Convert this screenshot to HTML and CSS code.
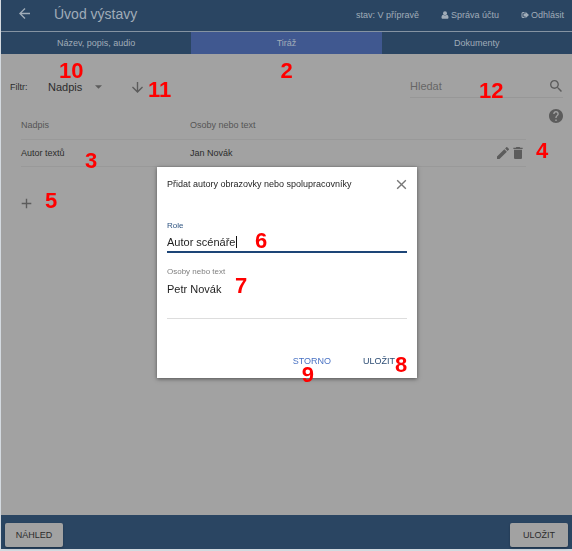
FILE: index.html
```html
<!DOCTYPE html>
<html lang="cs">
<head>
<meta charset="utf-8">
<meta name="viewport" content="width=device-width, initial-scale=1">
<title>Úvod výstavy</title>
<link rel="stylesheet" href="styles.css">
</head>
<body>
<div class="app">
  <header class="topbar">
    <button class="icon-button" type="button" aria-label="Zpět"><svg class="icon" viewBox="4 4 16 16"><path d="M20 11H7.83l5.59-5.59L12 4l-8 8 8 8 1.41-1.41L7.83 13H20v-2z"/></svg></button>
    <h1 class="topbar-title">Úvod výstavy</h1>
    <span class="topbar-item">stav: V přípravě</span>
    <a class="topbar-item" href="#"><svg class="icon-small" viewBox="0 0 16 16"><circle cx="8" cy="4.5" r="4"/><path d="M4.5 7.5C2 8 1 10 1 13c0 1.500 1 2.500 2.500 2.500h9c1.500 0 2.500-1 2.500-2.500 0-3-1-5-3.500-5.500-2 2-5 2-7 0z"/></svg>Správa účtu</a>
    <a class="topbar-item" href="#"><svg class="icon-small" viewBox="0 0 16 16"><path d="M7 2H4a3 3 0 0 0-3 3v6a3 3 0 0 0 3 3h3v-2H4.500C3.500 12 3 11.500 3 10.500v-5C3 4.500 3.500 4 4.500 4H7z"/><path d="M9 1.500 16 8l-7 6.500V11H5V5h4z"/></svg>Odhlásit</a>
  </header>
  <nav class="tabs">
    <a class="tab" href="#">Název, popis, audio</a>
    <a class="tab tab-active" href="#">Tiráž<span class="pin pin-tab">2</span></a>
    <a class="tab" href="#">Dokumenty</a>
  </nav>
  <main class="content">
    <div class="toolbar">
      <label class="filter-label" for="filter">Filtr:</label>
      <div class="filter">
        <select id="filter" class="filter-select"><option>Nadpis</option></select>
        <svg class="filter-arrow" viewBox="0 0 10 5"><path d="M0 0h10L5 5z"/></svg>
        <span class="pin pin-filter">10</span>
      </div>
      <div class="sort">
        <button class="icon-button" type="button" aria-label="Směr řazení"><svg class="icon" viewBox="4 4 16 16"><path d="M20 12l-1.410-1.410L13 16.170V4h-2v12.170l-5.580-5.590L4 12l8 8 8-8z"/></svg></button>
        <span class="pin pin-sort">11</span>
      </div>
      <div class="search">
        <input class="search-input" type="search" placeholder="Hledat" aria-label="Hledat">
        <svg class="search-icon" viewBox="3 3 17.500 17.500"><path d="M15.500 14h-.79l-.28-.27C15.410 12.590 16 11.110 16 9.500 16 5.910 13.090 3 9.500 3S3 5.910 3 9.500 5.910 16 9.500 16c1.610 0 3.090-.59 4.230-1.570l.27.28v.79l5 4.990L20.490 19l-4.990-5zm-6 0C7.010 14 5 11.990 5 9.500S7.010 5 9.500 5 14 7.010 14 9.500 11.990 14 9.500 14z"/></svg>
        <span class="pin pin-search">12</span>
      </div>
    </div>
    <div class="listing">
      <table class="credits">
        <thead><tr><th class="col-role">Nadpis</th><th>Osoby nebo text</th><th class="col-actions"></th></tr></thead>
        <tbody><tr>
          <td>Autor textů<span class="pin pin-row">3</span></td>
          <td>Jan Novák</td>
          <td><div class="row-actions">
            <button class="icon-button" type="button" aria-label="Upravit"><svg class="icon" viewBox="3 3 18 18"><path d="M3 17.250V21h3.750L17.810 9.940l-3.750-3.750L3 17.250zM20.710 7.040a1 1 0 0 0 0-1.410l-2.340-2.340a1 1 0 0 0-1.410 0l-1.830 1.830 3.750 3.750 1.830-1.830z"/></svg></button>
            <button class="icon-button" type="button" aria-label="Smazat"><svg class="icon" viewBox="3 3 18 18"><path d="M6 19c0 1.100.9 2 2 2h8c1.100 0 2-.9 2-2V7H6v12zM19 4h-3.500l-1-1h-5l-1 1H5v2h14V4z"/></svg></button>
            <span class="pin pin-actions">4</span>
          </div></td>
        </tr></tbody>
      </table>
      <button class="icon-button help" type="button" aria-label="Nápověda"><svg class="icon-help" viewBox="2 2 20 20"><path d="M12 2C6.480 2 2 6.480 2 12s4.480 10 10 10 10-4.480 10-10S17.520 2 12 2zm1 17h-2v-2h2v2zm2.070-7.750l-.9.920C13.450 12.900 13 13.500 13 15h-2v-.5c0-1.100.45-2.100 1.170-2.830l1.240-1.260c.37-.36.59-.86.59-1.410 0-1.100-.9-2-2-2s-2 .9-2 2H8c0-2.210 1.790-4 4-4s4 1.790 4 4c0 .88-.36 1.680-.93 2.250z"/></svg></button>
    </div>
    <div class="add">
      <button class="icon-button" type="button" aria-label="Přidat"><svg class="icon" viewBox="4 4 16 16"><path d="M19 13h-6v6h-2v-6H5v-2h6V5h2v6h6v2z"/></svg></button>
      <span class="pin pin-add">5</span>
    </div>
  </main>
  <footer class="bottombar">
    <button class="raised" type="button">NÁHLED</button>
    <button class="raised" type="button">ULOŽIT</button>
  </footer>
</div>
<div class="overlay">
  <form class="dialog" role="dialog" aria-labelledby="dialog-title">
    <div class="dialog-head">
      <h2 class="dialog-title" id="dialog-title">Přidat autory obrazovky nebo spolupracovníky</h2>
      <button class="icon-button dialog-close" type="button" aria-label="Zavřít"><svg class="icon" viewBox="4 4 16 16"><path d="M19 6.410L17.590 5 12 10.590 6.410 5 5 6.410 10.590 12 5 17.590 6.410 19 12 13.410 17.590 19 19 17.590 13.410 12z"/></svg></button>
    </div>
    <div class="field field-active">
      <label class="field-label" for="role">Role</label>
      <input class="field-input" id="role" type="text" value="Autor scénáře">
      <span class="caret"></span>
      <span class="pin pin-role">6</span>
    </div>
    <div class="field">
      <label class="field-label" for="people">Osoby nebo text</label>
      <textarea class="field-input field-area" id="people">Petr Novák</textarea>
      <span class="pin pin-people">7</span>
    </div>
    <div class="dialog-actions">
      <button class="flat" type="button">STORNO<span class="pin pin-cancel">9</span></button>
      <button class="flat flat-primary" type="button">ULOŽIT<span class="pin pin-save">8</span></button>
    </div>
  </form>
</div>
</body>
</html>
```
FILE: styles.css
```css
* { box-sizing: border-box; }

body {
  margin: 0;
  font-family: "Liberation Sans", Arial, sans-serif;
  font-size: 9px;
  line-height: 12px;
  color: #2c2c2c;
  background: #d4dae0;
}

button, input, select, textarea { font: inherit; color: inherit; border: 0; margin: 0; padding: 0; background: none; outline: 0; }
a { color: inherit; text-decoration: none; }
svg { display: block; fill: currentColor; flex: none; }

.app { display: flex; flex-direction: column; min-height: 100vh; padding: 0 0 2px 1px; }

.icon-button { display: flex; align-items: center; justify-content: center; width: 16px; height: 16px; color: #5c5c5c; }
.icon { width: 11px; height: 11px; }
.icon-small { width: 8px; height: 8px; }
.icon-help { width: 14px; height: 14px; }

.topbar { display: flex; align-items: center; height: 31px; padding: 0 8px 4px 15px; background: #2a4562; color: #a0acb8; }
.topbar .icon-button { color: inherit; }
.topbar-title { flex: 1; margin: 0 0 0 22px; font-size: 14px; line-height: 18px; font-weight: 400; }
.topbar-item { display: flex; align-items: center; gap: 2px; margin: 3px 0 0 22px; white-space: nowrap; }

.tabs { display: grid; grid-template-columns: repeat(3, 1fr); height: 23px; border-top: 1px solid #8593a2; }
.tab { position: relative; display: flex; align-items: center; justify-content: center; background: #2a4562; color: #a0acb8; }
.tab-active { background: #405890; }

.content { flex: 1; background: #a2a2a2; }

.toolbar { display: flex; align-items: center; height: 58px; padding: 8px 9px 0; }
.filter-label { width: 38px; }
.filter { position: relative; display: flex; align-items: center; width: 56px; }
.filter-select { width: 100%; font-size: 11px; line-height: 14px; appearance: none; }
.filter-arrow { position: absolute; right: 2px; width: 7px; height: 4px; color: #5c5c5c; pointer-events: none; }
.sort { position: relative; margin-left: 25px; }
.search { position: relative; display: flex; align-items: center; width: 153px; height: 22px; margin-left: auto; padding-bottom: 2px; border-bottom: 1px solid #979797; }
.search-input { flex: 1; min-width: 0; font-size: 11px; line-height: 14px; appearance: none; }
.search-input::placeholder { color: #666; opacity: 1; }
.search-icon { width: 12px; height: 12px; margin-right: 1px; color: #5c5c5c; }

.listing { display: flex; align-items: flex-start; justify-content: space-between; padding: 0 8px 0 20px; }
.help { margin-top: -4px; }
.credits { width: calc(100% - 38px); table-layout: fixed; border-collapse: collapse; }
.credits th, .credits td { position: relative; height: 27px; padding: 0; text-align: left; font-weight: 400; border-bottom: 1px solid #999; }
.credits th { color: #555; }
.col-role { width: 169px; }
.col-actions { width: 31px; }
.row-actions { position: relative; display: flex; justify-content: flex-end; }
.row-actions .icon { width: 12px; height: 12px; }

.add { position: relative; width: 16px; margin: 29px 0 0 17px; }

.bottombar { display: flex; align-items: center; justify-content: space-between; height: 34px; padding: 5px 4px 0; background: #2a4562; }
.raised { min-width: 58px; height: 24px; padding: 0 10px; border-radius: 2px; background: #a2a2a2; box-shadow: 0 1px 2px #1d3147; }

.overlay { position: fixed; inset: 0; display: flex; align-items: center; justify-content: center; padding: 0 0 6px 2px; }
.dialog { width: 260px; padding: 9px 10px 6px; background: #fff; color: #1e1e1e; box-shadow: 0 1px 4px rgba(0, 0, 0, .5); }
.dialog-head { display: flex; align-items: center; justify-content: space-between; margin-bottom: 28px; }
.dialog-title { margin: 0; font-size: 9px; line-height: 12px; font-weight: 400; white-space: nowrap; }
.dialog-close { width: 12px; color: #777; }

.field { position: relative; margin-bottom: 13px; }
.field-label { display: block; font-size: 8px; line-height: 12px; color: #808080; }
.field-active .field-label { color: #2d5380; }
.field-input { display: block; width: 100%; height: 21px; font-size: 11px; line-height: 14px; border-bottom: 1px solid #ddd; }
.field-active .field-input { border-bottom: 2px solid #1d4577; }
.field-area { height: 41px; padding-top: 4px; resize: none; overflow: hidden; }
.caret { position: absolute; left: 69px; top: 16px; width: 1px; height: 12px; background: #111; }

.dialog-actions { display: flex; justify-content: flex-end; gap: 32px; margin-top: 31px; padding: 0 12px 0 0; }
.flat { position: relative; height: 22px; color: #4a73c4; }
.flat-primary { color: #2d4d74; }

/* Numbered callouts of the user guide */
.pin { position: absolute; z-index: 1; font-size: 22px; line-height: 22px; font-weight: 700; color: #f00; pointer-events: none; }
.pin-tab { left: 50%; top: 28px; margin-left: -6px; }
.pin-filter { left: 11px; top: -20px; }
.pin-sort { left: 19px; top: 0; }
.pin-search { left: 69px; top: 4px; }
.pin-row { left: 64px; top: 10px; }
.pin-actions { left: 41px; top: -5px; }
.pin-add { left: 27px; top: -6px; }
.pin-role { left: 88px; top: 10px; }
.pin-people { left: 68px; top: 9px; }
.pin-cancel { left: 9px; top: 14px; }
.pin-save { left: 32px; top: 4px; }
```
